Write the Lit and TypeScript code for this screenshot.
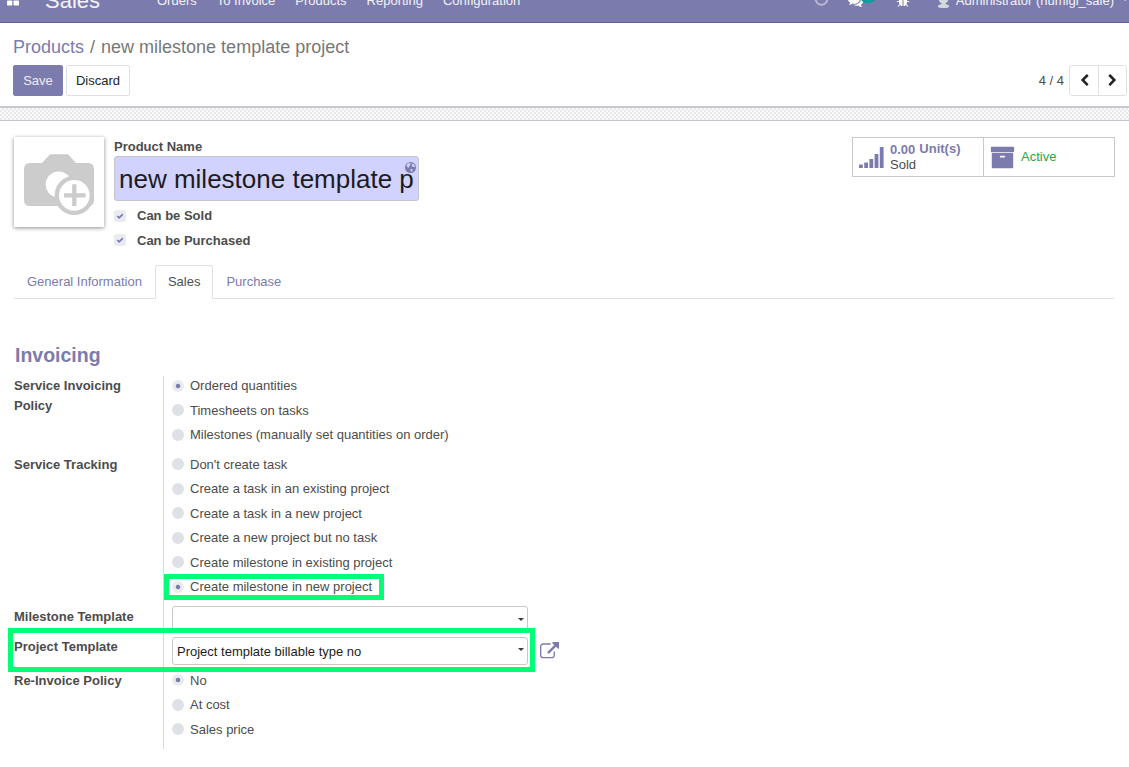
import { LitElement, html, css, svg } from "lit";
import { customElement } from "lit/decorators.js";
import { classMap } from "lit/directives/class-map.js";

const chevron = "M1427 301l-531 531 531 531q19 19 19 45t-19 45l-166 166q-19 19-45 19t-45-19l-742-742q-19-19-19-45t19-45l742-742q19-19 45-19t45 19l166 166q19 19 19 45t-19 45z";
const externalLink = "M1408 928v320q0 119-84.5 203.5t-203.5 84.5h-832q-119 0-203.5-84.5t-84.5-203.5v-832q0-119 84.5-203.5t203.5-84.5h704q14 0 23 9t9 23v64q0 14-9 23t-23 9h-704q-66 0-113 47t-47 113v832q0 66 47 113t113 47h832q66 0 113-47t47-113v-320q0-14 9-23t23-9h64q14 0 23 9t9 23zm384-864v512q0 26-19 45t-45 19-45-19l-176-176-652 652q-10 10-23 10t-23-10l-114-114q-10-10-10-23t10-23l652-652-176-176q-19-19-19-45t19-45 45-19h512q26 0 45 19t19 45z";
const archive = "M1088 832q0-26-19-45t-45-19h-256q-26 0-45 19t-19 45 19 45 45 19h256q26 0 45-19t19-45zm576-192v960q0 26-19 45t-45 19h-1408q-26 0-45-19t-19-45v-960q0-26 19-45t45-19h1408q26 0 45 19t19 45zm64-448v256q0 26-19 45t-45 19h-1536q-26 0-45-19t-19-45v-256q0-26 19-45t45-19h1536q26 0 45 19t19 45z";
const comments = "M1408 768q0 139-94 257t-256.5 186.5-353.5 68.5q-86 0-176-16-124 88-278 128-36 9-86 16h-3q-11 0-20.5-8t-11.5-21q-1-3-1-6.5t.5-6.5 2-6l2.5-5 3.5-5.5 4-5 4.5-5 4-4.5q5-6 23-25t26-29.5 22.5-29 25-38.5 20.5-44q-124-72-195-177t-71-224q0-139 94-257t256.5-186.5 353.5-68.5 353.5 68.5 256.5 186.5 94 257zm384 256q0 120-71 224.5t-195 176.5q10 24 20.5 44t25 38.5 22.5 29 26 29.5 23 25q1 1 4 4.5t4.5 5 4 5 3.5 5.5l2.5 5 2 6 .5 6.5-1 6.5q-3 14-13 22t-22 7q-50-7-86-16-154-40-278-128-90 16-176 16-271 0-472-132 58 4 88 4 161 0 309-45t264-129q125-92 192-212t67-254q0-77-23-152 129 71 204 178t75 230z";
const bug = "M1696 960q0 26-19 45t-45 19h-224q0 171-67 290l208 209q19 19 19 45t-19 45q-18 19-45 19t-45-19l-198-197q-5 5-15 13t-42 28.5-65 36.5-82 29-97 13v-896h-128v896q-51 0-101.5-13.5t-87-33-66-39-43.5-32.5l-15-14-183 207q-20 21-48 21-24 0-43-16-19-18-20.5-44.5t15.5-46.5l202-227q-58-114-58-274h-224q-26 0-45-19t-19-45 19-45 45-19h224v-294l-173-173q-19-19-19-45t19-45 45-19 45 19l173 173h844l173-173q19-19 45-19t45 19 19 45-19 45l-173 173v294h224q26 0 45 19t19 45z";

const glyph = (d: string, size: number) =>
  html`<svg width=${size} height=${size} viewBox="0 0 1792 1792">${svg`<path fill="currentColor" d=${d}></path>`}</svg>`;

interface Option {
  label: string;
  checked?: boolean;
  marked?: boolean;
}

const invoicingPolicy: Option[] = [
  { label: "Ordered quantities", checked: true },
  { label: "Timesheets on tasks" },
  { label: "Milestones (manually set quantities on order)" },
];
const serviceTracking: Option[] = [
  { label: "Don't create task" },
  { label: "Create a task in an existing project" },
  { label: "Create a task in a new project" },
  { label: "Create a new project but no task" },
  { label: "Create milestone in existing project" },
  { label: "Create milestone in new project", checked: true, marked: true },
];
const reinvoicePolicy: Option[] = [
  { label: "No", checked: true },
  { label: "At cost" },
  { label: "Sales price" },
];

@customElement("app-navbar")
class AppNavbar extends LitElement {
  static styles = css`
    :host { display: block; height: 23px; overflow: hidden; }
    .bar { box-sizing: border-box; display: flex; align-items: center; height: 46px; margin-top: -23px;
      padding: 2px 0 0 7px; background: #7c7bad; border-bottom: 1px solid #5f5e97; color: #f3f3f8; white-space: nowrap; }
    svg { display: block; }
    .brand { font-size: 22px; line-height: 30px; margin-left: 26px; width: 112px; }
    .menu { display: flex; gap: 20px; flex: 1; }
    .tools { display: flex; align-items: center; }
    .ring { margin-right: 20px; }
    .chat { position: relative; margin-right: 33px; color: #fff; }
    .badge { position: absolute; left: 12px; top: -5px; width: 16px; height: 15px; border-radius: 7px; background: #00a09d; }
    .bug { margin-right: 27px; color: #fff; }
    .avatar { margin-right: 6px; }
    .caret { margin: -4px 0 0 7px; border: 4px solid transparent; border-top-color: #e8e8f0; border-bottom: 0; }
  `;
  render() {
    return html`<nav class="bar">
      <svg width="12" height="12" viewBox="0 0 12 12" fill="#fff"><rect width="5.3" height="5" rx=".7"/><rect x="6.5" width="5.5" height="5" rx=".7"/><rect y="5.5" width="5.3" height="5" rx=".7"/><rect x="6.5" y="5.5" width="5.5" height="5" rx=".7"/></svg>
      <span class="brand">Sales</span>
      <div class="menu"><span>Orders</span><span>To Invoice</span><span>Products</span><span>Reporting</span><span>Configuration</span></div>
      <div class="tools">
        <svg class="ring" width="14" height="14" viewBox="0 0 14 14"><circle cx="7.500" cy="5" r="5.800" fill="none" stroke="#b9b8d3" stroke-width="2"/></svg>
        <span class="chat">${glyph(comments, 15)}<i class="badge"></i></span>
        <span class="bug">${glyph(bug, 14)}</span>
        <svg class="avatar" width="13" height="16" viewBox="0 0 13 16" fill="#d4dada"><circle cx="6.5" cy="6" r="4.7"/><path d="M4.5 9h4v2.2c2.600 0 3.500 1 3.500 2.200 0 2-11 2-11 0 0-1.200.9-2.200 3.500-2.200z"/></svg>
        <span>Administrator (numigi_sale)</span><i class="caret"></i>
      </div>
    </nav>`;
  }
}

@customElement("radio-list")
class RadioList extends LitElement {
  static properties = { options: { attribute: false } };
  declare options: Option[];
  static styles = css`
    :host { display: block; }
    .item { position: relative; display: flex; align-items: center; gap: 6px; height: 19.500px; margin-bottom: 5px; white-space: nowrap; }
    .dot { width: 12px; height: 12px; border-radius: 50%; background: #dee2e6; }
    .dot.on { background: radial-gradient(circle, #7c7bad 0 1.800px, #e9ecef 2.700px); }
    .mark { position: absolute; left: -8px; top: -3px; box-sizing: border-box; width: 220.400px; height: 26px; border: 5px solid #00ff75; }
  `;
  render() {
    return this.options.map((o) => html`<div class="item">
      <span class=${classMap({ dot: true, on: !!o.checked })}></span><span>${o.label}</span>
      ${o.marked ? html`<span class="mark"></span>` : null}
    </div>`);
  }
}

@customElement("app-root")
class AppRoot extends LitElement {
  static styles = css`
    :host { display: block; width: 1129px; height: 767px; overflow: hidden; background: #fff;
      font: 13px/19.500px "Liberation Sans", Arial, sans-serif; color: #4c4c4c; }
    svg { display: block; }
    .panel { box-sizing: border-box; height: 83px; padding: 14px 2px 0 13px; }
    .crumbs { display: flex; gap: 6px; font-size: 18px; line-height: 20px; height: 28px; color: #777; white-space: nowrap; }
    .link { color: #7c7bad; }
    .actions { display: flex; gap: 3px; height: 31px; }
    .btn { box-sizing: border-box; display: flex; align-items: center; justify-content: center; border: 1px solid #dee2e6; border-radius: 2px; color: #212529; }
    .save { width: 50px; background: #7c7bad; border-color: #7c7bad; color: #f0eeee; }
    .discard { width: 64px; }
    .pager { display: flex; align-items: center; margin-left: auto; gap: 5px; }
    .pair { display: flex; height: 31px; }
    .prev { width: 30px; border-radius: 3px 0 0 3px; }
    .next { width: 29px; margin-left: -1px; border-radius: 0 3px 3px 0; }
    .next svg { transform: scaleX(-1); }
    .strip { box-sizing: border-box; height: 15px; border-top: 2px solid #c9c9cd; border-bottom: 1px solid #c4c4d0;
      background: repeating-conic-gradient(#e8e8e8 0 25%, #fbfbfb 0 50%) 0 0 / 4px 4px; }
    .sheet { padding: 16px 14px 0; }
    .head { display: flex; height: 128px; }
    .photo { width: 90px; height: 90px; box-shadow: 0 1px 4px rgba(0,0,0,.45); }
    .title { margin-left: 10px; width: 305px; font-weight: bold; }
    .caption { height: 19px; }
    .name { position: relative; box-sizing: border-box; height: 45px; padding: 0 4px; border: 1px solid #c5c5cf; border-radius: 3px;
      background: #d2d2ff; color: #1c1c1e; font: 26px/44px "Liberation Sans", Arial, sans-serif; white-space: nowrap; }
    .globe { position: absolute; right: 2px; top: 5px; }
    .check { display: flex; align-items: center; gap: 11px; height: 19.500px; margin-bottom: 5px; }
    .checks { margin-top: 5px; }
    .stats { box-sizing: border-box; display: grid; grid-template-columns: 130px 1fr; width: 263px; height: 40px; margin: 0 0 0 auto; border: 1px solid #c8c8c8; }
    .stat { display: flex; align-items: center; box-sizing: border-box; padding-left: 6px; }
    .stat + .stat { border-left: 1px solid #c8c8c8; }
    .figures { margin-left: 6px; line-height: 15px; padding-bottom: 1px; }
    .qty { display: flex; gap: 4px; font-weight: bold; }
    .unit { margin-top: -1px; }
    .active { color: #28a745; margin-left: 6px; }
    .tabs { display: flex; box-sizing: border-box; height: 34px; border-bottom: 1px solid #dee2e6; width: 1100px; }
    .tab { box-sizing: border-box; height: 34px; padding: 7px 13px 0; color: #7c7bad; }
    .current { width: 58px; margin-right: .500px; padding: 6px 12px 0; border: 1px solid #dee2e6; border-bottom-color: #fff; border-radius: 3px 3px 0 0; color: #495057; }
    h2 { margin: 44px 0 0 1px; height: 33px; font-size: 19.500px; line-height: 24px; color: #7c7bad; }
    .group { display: grid; grid-template-columns: 149px 1fr; grid-template-rows: 78.600px 151.400px 31px 33.600px 78.400px; position: relative; }
    .label { font-weight: bold; line-height: 20px; padding-right: 20px; }
    .value { border-left: 1px solid #d8d8d8; padding-left: 8px; }
    .low { padding-top: 1px; }
    .line { display: flex; align-items: center; gap: 12px; }
    .top { align-items: flex-start; }
    .select { box-sizing: border-box; display: flex; align-items: center; justify-content: space-between; width: 356px; height: 28px; padding: 1px 3px 0 4px; border: 1px solid #c8c8c8; border-radius: 3px; color: #1c1c1e; }
    .short { height: 25px; }
    .open { padding-top: 5px; }
    .arrow { border: 3px solid transparent; border-top-color: #3c3c3c; border-bottom: 0; margin-top: -3px; }
    .short .arrow { margin-top: 1px; }
    .area { position: absolute; left: -6.300px; top: 252px; box-sizing: border-box; width: 527.500px; height: 43.500px; border: 5px solid #00ff75; }
  `;

  checkbox(label: string) {
    return html`<div class="check"><svg width="12" height="12" viewBox="0 0 12 12"><rect width="12" height="12" rx="2.500" fill="#e9ecef"/><path d="M3.300 6l1.900 1.900L8.800 4.200" fill="none" stroke="#7c7bad" stroke-width="1.700"/></svg><span>${label}</span></div>`;
  }

  render() {
    return html`
      <app-navbar></app-navbar>
      <header class="panel">
        <div class="crumbs"><span class="link">Products</span><span>/</span><span>new milestone template project</span></div>
        <div class="actions">
          <span class="btn save">Save</span><span class="btn discard">Discard</span>
          <div class="pager"><span>4 / 4</span><div class="pair"><span class="btn prev">${glyph(chevron, 13)}</span><span class="btn next">${glyph(chevron, 13)}</span></div></div>
        </div>
      </header>
      <div class="strip"></div>
      <main class="sheet">
        <section class="head">
          <div class="photo">
            <svg width="90" height="90" viewBox="0 0 90 90">
              <path fill="#ccc" d="M16 26h12l8-8.700h18l8 8.700h12q6 0 6 6v31q0 6-6 6H16q-6 0-6-6V32q0-6 6-6z"/>
              <circle cx="44.700" cy="47.500" r="13" fill="#fff"/>
              <circle cx="60.300" cy="58.300" r="17.500" fill="#fff" stroke="#ccc" stroke-width="4.300"/>
              <path d="M50 58.300h21.600M60.300 47.300v21.700" stroke="#ccc" stroke-width="4.300"/>
            </svg>
          </div>
          <div class="title">
            <div class="caption">Product Name</div>
            <div class="name">new milestone template p<svg class="globe" width="11" height="11" viewBox="0 0 11 11"><circle cx="5.500" cy="5.500" r="5.500" fill="#7c7bad"/><path fill="#d2d2ff" d="M1.300 3.200L3 1.300l2.300-.3.400 1.300-1 .8.300 1-1.400.7.500 1.200-1.300-.4zM6.800 1.300l2 1 1.300 2-.8 1-1.500-.8-.9-.2-.4-1.100.8-.7zM5.400 6.800l1.800.5.600 1.100-1.300 1.300-.8-.6z"/></svg></div>
            <div class="checks">${this.checkbox("Can be Sold")}${this.checkbox("Can be Purchased")}</div>
          </div>
          <div class="stats">
            <div class="stat">
              <svg width="25" height="21" viewBox="0 0 25 21" fill="#7c7bad"><rect y="17.500" width="3.800" height="3.500" rx=".6"/><rect x="5.200" y="15.500" width="3.800" height="5.500" rx=".6"/><rect x="10.400" y="12" width="3.800" height="9" rx=".6"/><rect x="15.600" y="7" width="3.800" height="14" rx=".6"/><rect x="20.800" y="0" width="3.800" height="21" rx=".6"/></svg>
              <div class="figures"><div class="qty link"><span>0.00</span><span class="unit">Unit(s)</span></div><div>Sold</div></div>
            </div>
            <div class="stat"><span class="link">${glyph(archive, 25)}</span><span class="active">Active</span></div>
          </div>
        </section>
        <nav class="tabs"><span class="tab">General Information</span><span class="tab current">Sales</span><span class="tab">Purchase</span></nav>
        <h2>Invoicing</h2>
        <section class="group">
          <div class="label">Service Invoicing Policy</div>
          <div class="value"><radio-list .options=${invoicingPolicy}></radio-list></div>
          <div class="label">Service Tracking</div>
          <div class="value"><radio-list .options=${serviceTracking}></radio-list></div>
          <div class="label low">Milestone Template</div>
          <div class="value line top"><div class="select short"><span></span><i class="arrow"></i></div></div>
          <div class="label">Project Template</div>
          <div class="value line top"><div class="select"><span>Project template billable type no</span><i class="arrow"></i></div><span class="link open">${glyph(externalLink, 19)}</span></div>
          <div class="label">Re-Invoice Policy</div>
          <div class="value"><radio-list .options=${reinvoicePolicy}></radio-list></div>
          <span class="area"></span>
        </section>
      </main>`;
  }
}
